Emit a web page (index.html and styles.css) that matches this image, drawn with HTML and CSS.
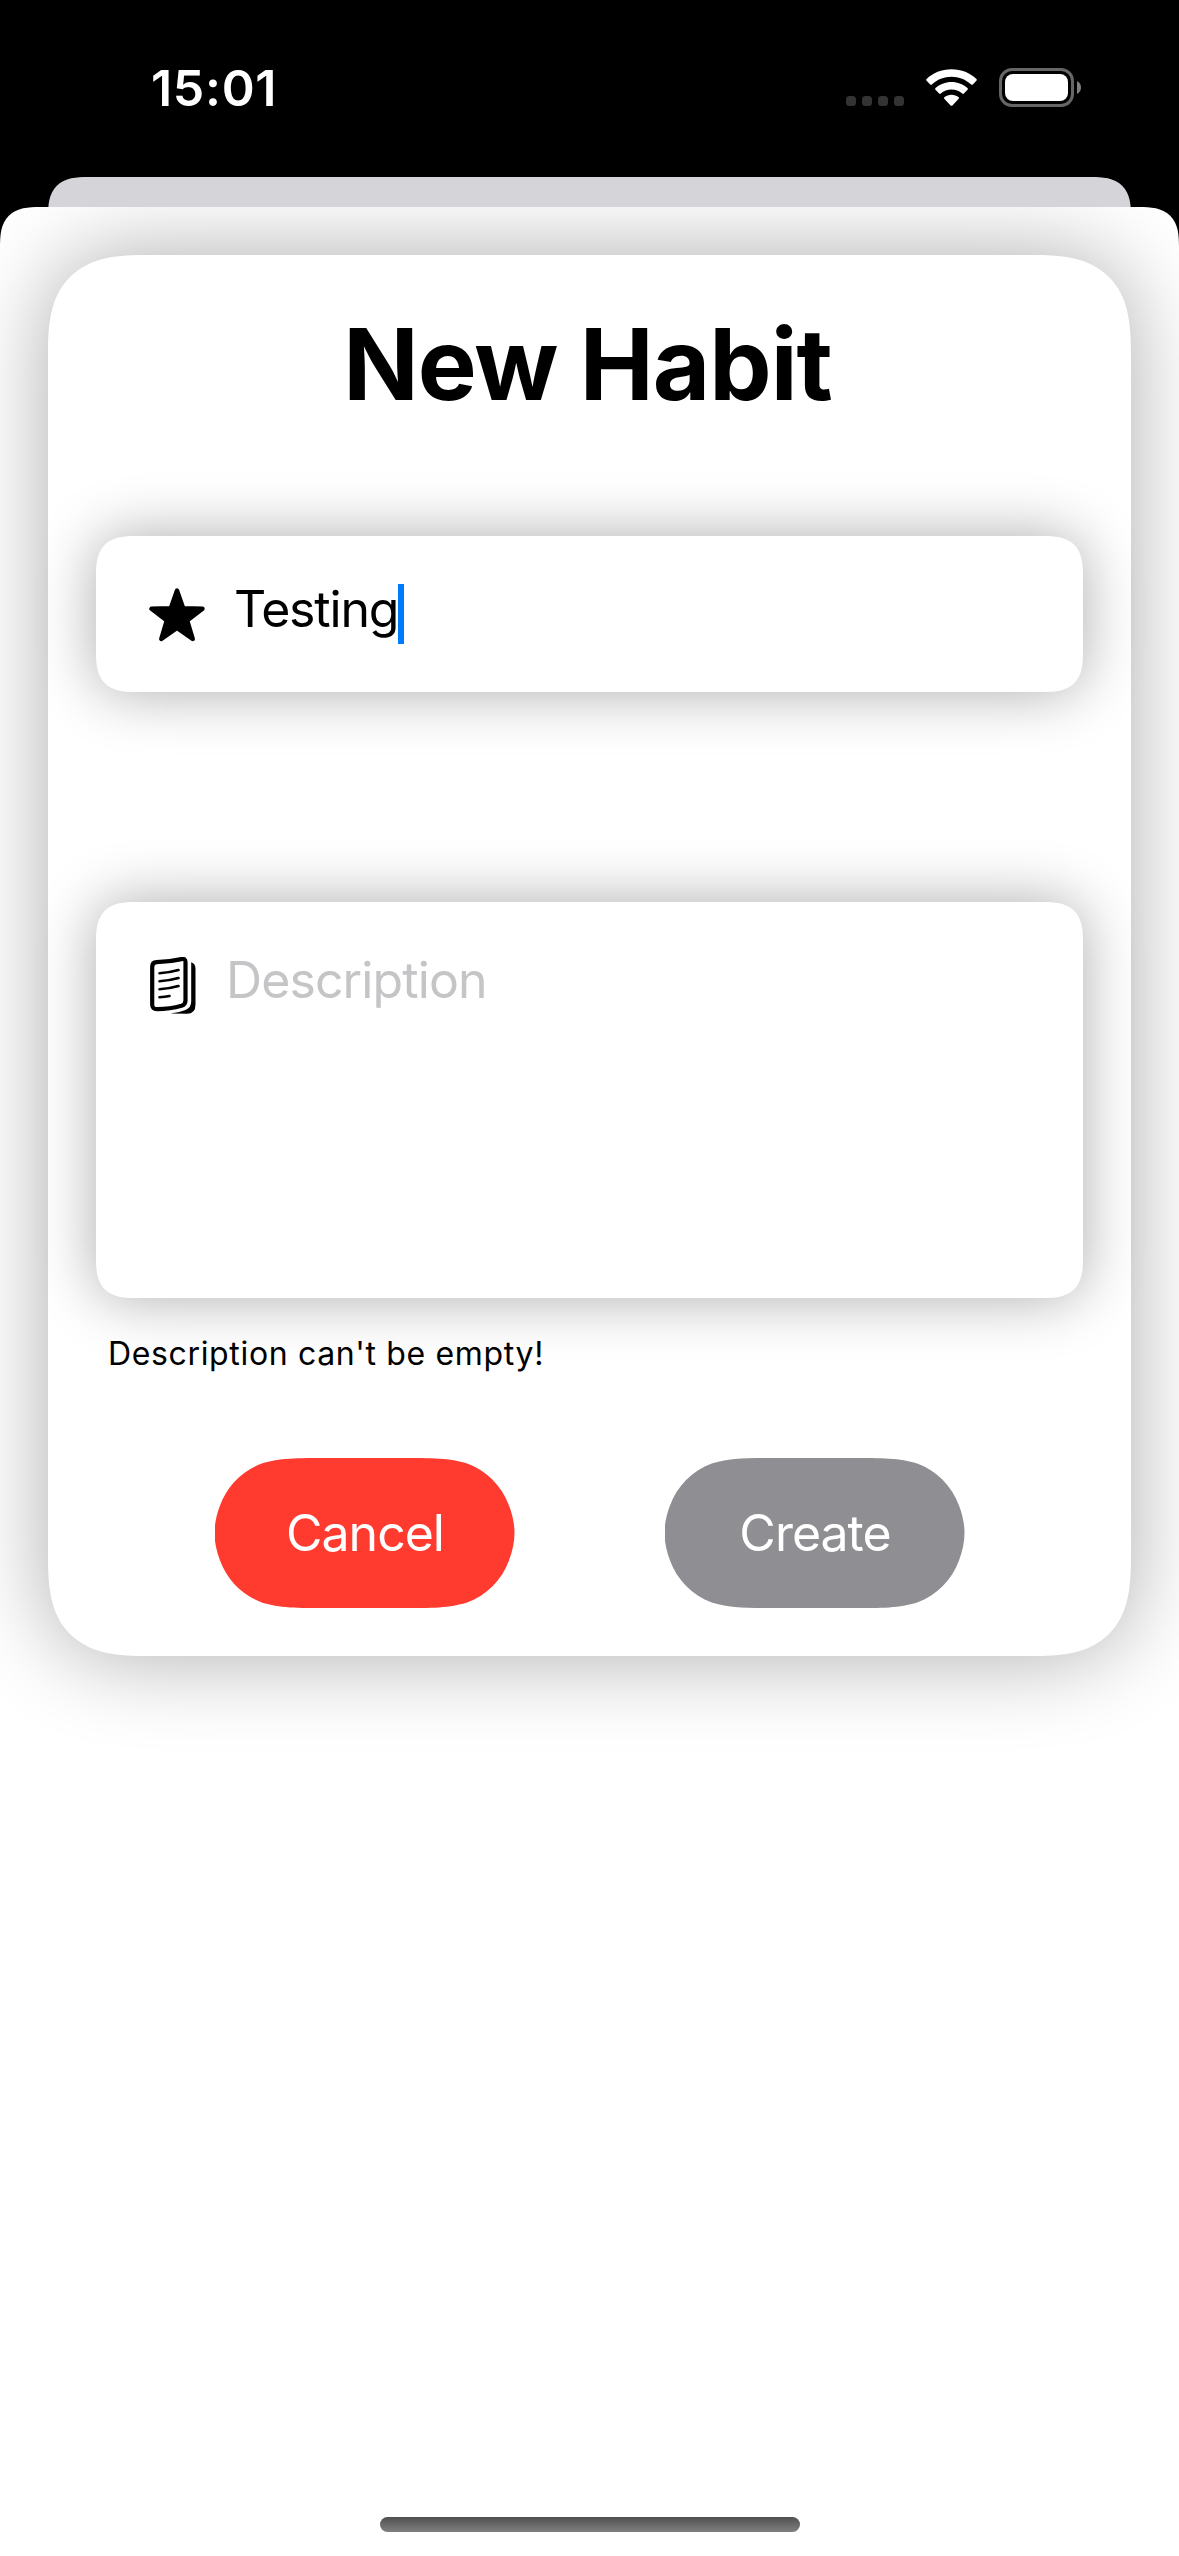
FILE: index.html
```html
<!DOCTYPE html>
<html lang="en">
<head>
<meta charset="utf-8">
<title>New Habit</title>
<link rel="stylesheet" href="styles.css">
</head>
<body>
<div class="screen">
  <header class="status-bar">
    <div class="time">15:01</div>
    <div class="status-icons">
      <div class="signal"><span></span><span></span><span></span><span></span></div>
      <svg class="wifi" viewBox="0 0 51 38" width="51" height="38" fill="#fff">
        <path d="M25.5 0.2C35.4 0.2 44.2 3.9 50.4 9.9Q51.3 10.8 50.4 11.7L46.8 15.4Q46 16.2 45.1 15.4C39.8 10.5 33 7.7 25.5 7.7S11.200 10.500 5.900 15.400Q5 16.200 4.200 15.400L0.600 11.700Q-0.300 10.800 0.600 9.900C6.800 3.900 15.600 0.200 25.500 0.200Z"/>
        <path d="M25.500 12.900C31.700 12.900 37.300 15.200 41.500 19Q42.400 19.900 41.500 20.800L37.900 24.500Q37.100 25.300 36.200 24.500C33.300 22 29.600 20.500 25.500 20.500S17.700 22 14.800 24.500Q13.900 25.300 13.100 24.500L9.500 20.800Q8.600 19.900 9.500 19C13.700 15.200 19.300 12.900 25.500 12.900Z"/>
        <path d="M25.500 25.700C28.200 25.700 30.800 26.600 32.700 28.200Q33.500 29 32.700 29.800L26.400 36.400Q25.500 37.300 24.600 36.400L18.300 29.800Q17.500 29 18.300 28.200C20.200 26.600 22.800 25.700 25.500 25.700Z"/>
      </svg>
      <svg class="battery" viewBox="0 0 83 39" width="83" height="39">
        <rect x="1.500" y="1.500" width="72" height="36" rx="11.500" fill="none" stroke="#666" stroke-width="3"/>
        <rect x="6" y="6" width="63" height="27" rx="8" fill="#fff"/>
        <path d="M78 13C80.700 14.200 82 16.700 82 19.500S80.700 24.800 78 26Z" fill="#808080"/>
      </svg>
    </div>
  </header>
  <div class="back-sheet"></div>
  <main class="sheet">
    <section class="card">
      <h1 class="title">New Habit</h1>
      <div class="field field-name">
        <svg class="star" viewBox="0 0 56 54" width="56" height="54">
          <path d="M28 2.500L34.200 20.200L53.500 20.800L38.200 32.500L43.700 51L28 40L12.300 51L17.800 32.500L2.500 20.800L21.800 20.200Z" stroke="#000" stroke-width="4.400" stroke-linejoin="round"/>
        </svg>
        <span class="value">Testing</span><span class="caret"></span>
      </div>
      <div class="field field-description">
        <svg class="pages" viewBox="0 0 46 57" width="46" height="57" fill="none" stroke="#000" stroke-linecap="round" stroke-linejoin="round">
          <path d="M6.500 5.200Q19 4.900 31.500 2.100Q35.500 1.200 35.500 5V43.500Q35.500 47.500 31.500 48.800Q20 52.200 7 52.200Q2.200 52.200 2.200 47.500V10Q2.200 5.400 6.500 5.200Z" stroke-width="4.200"/>
          <path d="M9.500 16.200Q19.500 15.600 28.500 13M9.500 24.200Q19.500 23.600 28.500 21M9.500 32.200Q19.500 31.600 28.500 29M9.500 40.200Q15 40 19.500 39.100" stroke-width="2.600"/>
          <path d="M41.200 5.200Q45.500 6.500 45.500 12V47.500Q45.500 56.800 37 56.800L20.500 56.600Q29 55.600 35.500 53Q41.200 50.500 41.200 44.500Z" fill="#000" stroke="none"/>
        </svg>
        <span class="placeholder">Description</span>
      </div>
      <p class="error">Description can't be empty!</p>
      <div class="actions">
        <button class="button cancel">Cancel</button>
        <button class="button create">Create</button>
      </div>
    </section>
    <div class="home-indicator"></div>
  </main>
</div>
</body>
</html>
```

FILE: styles.css
```css
* {
  box-sizing: border-box;
}

body {
  margin: 0;
  background: #000;
  color: #000;
  font-family: Inter, "Liberation Sans", sans-serif;
}

.screen {
  display: flex;
  flex-direction: column;
  width: 1179px;
  height: 2556px;
  overflow: hidden;
  background: #000;
}

.status-bar {
  display: flex;
  justify-content: space-between;
  height: 177px;
  padding: 58px 97px 0 151px;
}

.time {
  font-size: 50px;
  font-weight: 600;
  line-height: 60px;
  letter-spacing: 0.7px;
  color: #fff;
}

.status-icons {
  display: flex;
  align-items: flex-start;
  padding-top: 10px;
}

.signal {
  display: flex;
  gap: 6px;
  margin: 28px 22px 0 0;
}

.signal span {
  width: 10px;
  height: 10px;
  border-radius: 3.5px;
  background: #333;
}

.wifi {
  margin: 1px 22px 0 0;
}

.back-sheet {
  height: 60px;
  margin: 0 48px -30px;
  border-radius: 30px 30px 0 0;
  background: linear-gradient(#d5d4d9 30px, transparent 30px);
}

.sheet {
  display: flex;
  flex: 1;
  flex-direction: column;
  align-items: center;
  justify-content: space-between;
  padding: 48px 48px 24px;
  overflow: hidden;
  border-radius: 30px 30px 0 0;
  background: #fff;
}

.card {
  display: flex;
  flex-direction: column;
  width: 1083px;
  height: 1401px;
  padding: 48px;
  border-radius: 80px;
  background: #fff;
  box-shadow: 0 0 90px rgba(0, 0, 0, 0.33);
}

.title {
  margin: 0 0 111px;
  padding-right: 4px;
  font-size: 99px;
  font-weight: 700;
  line-height: 122px;
  letter-spacing: -1px;
  text-align: center;
}

.field {
  display: flex;
  align-items: flex-start;
  border-radius: 32px;
  background: #fff;
  box-shadow: 0 0 60px rgba(0, 0, 0, 0.33);
  font-size: 50px;
  line-height: 60px;
}

.field-name {
  height: 156px;
  margin-bottom: 210px;
  padding: 43px 53px;
}

.star {
  margin: 9px 29px 0 0;
}

.value {
  letter-spacing: -1.2px;
}

.caret {
  width: 6px;
  height: 60px;
  margin-top: 5px;
  background: #007aff;
}

.field-description {
  height: 396px;
  padding: 48px 54px;
}

.pages {
  margin: 7px 30px 0 0;
}

.placeholder {
  color: #c5c5c7;
  letter-spacing: -0.9px;
}

.error {
  margin: 36px 12px 0;
  font-size: 32px;
  line-height: 40px;
  letter-spacing: 0.65px;
}

.actions {
  display: flex;
  justify-content: center;
  gap: 150px;
  margin-top: 84px;
}

.button {
  width: 300px;
  height: 150px;
  padding: 0 0 0 1px;
  border: 0;
  color: #fff;
  font: 400 50px/60px Inter, "Liberation Sans", sans-serif;
  letter-spacing: -1px;
  clip-path: path("M114.6 0H185.400C218.400 0 234.900 0 252.700 5.600C272 12.700 287.300 28 294.400 47.300C298.100 57 300 66 300 75S298.100 93 294.400 102.700C287.300 122 272 137.300 252.700 144.400C234.900 150 218.400 150 185.400 150H114.600C81.600 150 65.100 150 47.300 144.400C28 137.300 12.700 122 5.600 102.700C1.900 93 0 84 0 75S1.900 57 5.600 47.300C12.700 28 28 12.700 47.300 5.600C65.100 0 81.600 0 114.600 0Z");
}

.cancel {
  background: #ff3b30;
}

.create {
  background: #8e8e93;
}

.home-indicator {
  width: 420px;
  height: 15px;
  border-radius: 8px;
  background: linear-gradient(#505050, #808080);
}

/* Continuous corners where the browser can draw them */
@supports (corner-shape: superellipse(1.48)) {
  .card {
    border-radius: 100px;
    corner-shape: superellipse(1.48);
  }

  .field,
  .back-sheet,
  .sheet {
    corner-shape: superellipse(1.48);
  }

  .field {
    border-radius: 40px;
  }

  .back-sheet,
  .sheet {
    border-radius: 40px 40px 0 0;
  }
}
```
